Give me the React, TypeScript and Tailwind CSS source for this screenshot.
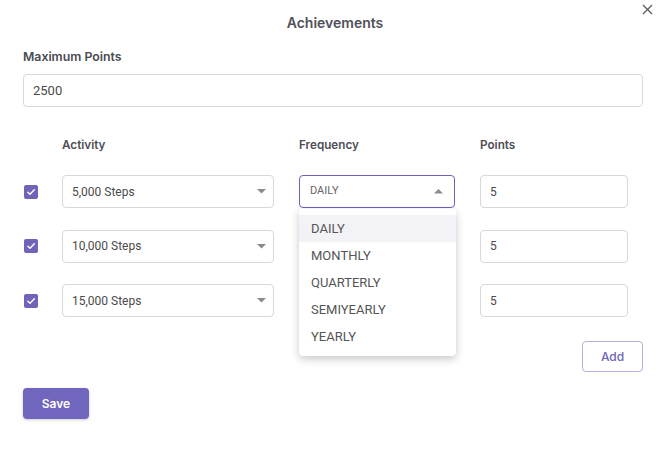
import React from "react";

const Check = () => (
  <div className="w-[14px] h-[14px] rounded-[2px] bg-[#7064b9] flex items-center justify-center shrink-0">
    <svg width="10" height="10" viewBox="0 0 10 10" fill="none">
      <path d="M1.8 5.2 L4 7.3 L8.3 2.8" stroke="white" strokeWidth="1.4" strokeLinecap="round" strokeLinejoin="round" />
    </svg>
  </div>
);

const Down = () => (
  <svg width="9" height="5" viewBox="0 0 9 5"><path d="M0 0 L9 0 L4.5 4.5 Z" fill="#8a8a8a" /></svg>
);
const Up = () => (
  <svg width="9" height="5" viewBox="0 0 9 5"><path d="M0 4.5 L9 4.5 L4.5 0 Z" fill="#8a8a8a" /></svg>
);

const rows = ["5,000 Steps", "10,000 Steps", "15,000 Steps"];
const opts = ["DAILY", "MONTHLY", "QUARTERLY", "SEMIYEARLY", "YEARLY"];
const roboto = { fontFamily: "Roboto, 'Noto Sans', sans-serif" };

export default function App() {
  return (
    <div
      className="relative w-[670px] h-[450px] bg-white pl-[23px] pr-[27px] flex flex-col text-[#4a4a52]"
      style={{ fontFamily: "Inter, 'Noto Sans', sans-serif" }}
    >
      <div className="h-[45px] flex items-center justify-center text-[14px] font-semibold text-[#505058] pl-[4px]">
        Achievements
      </div>
      <button className="absolute top-[3px] right-[17px] w-[12px] h-[12px] flex items-center justify-center">
        <svg width="11" height="11" viewBox="0 0 11 11">
          <path d="M1 1 L10 10 M10 1 L1 10" stroke="#5a5a62" strokeWidth="1.3" />
        </svg>
      </button>

      <div className="mt-[2px] h-[20px] flex items-center text-[12.3px] font-semibold">Maximum Points</div>
      <div
        className="mt-[7px] h-[33px] border border-[#d8d8dc] rounded-[4px] flex items-center px-[9px] text-[13px] text-[#4a4a4a]"
        style={roboto}
      >
        2500
      </div>

      <div className="mt-[29px] h-[20px] flex items-center text-[11.7px] font-semibold text-[#4d4d55]">
        <div className="w-[39px]" />
        <div className="w-[237px]">Activity</div>
        <div className="w-[181px]">Frequency</div>
        <div>Points</div>
      </div>

      <div className="relative mt-[19px] flex flex-col gap-[21.5px]">
        {rows.map((r, i) => (
          <div key={r} className="flex items-center pl-[1px]">
            <Check />
            <div
              className="ml-[24px] w-[212px] h-[33px] border border-[#d8d8dc] rounded-[4px] flex items-center justify-between pl-[9px] pr-[7px] text-[12px] text-[#4a4a4a]"
              style={roboto}
            >
              <span>{r}</span>
              <Down />
            </div>
            <div
              className={
                "ml-[25px] w-[156px] h-[33px] rounded-[4px] flex items-center justify-between pl-[10px] pr-[11px] text-[11px] text-[#666] " +
                (i === 0 ? "border border-[#6e63b8]" : "border border-[#d8d8dc]")
              }
              style={roboto}
            >
              <span>{i === 0 ? "DAILY" : ""}</span>
              {i === 0 ? <Up /> : <Down />}
            </div>
            <div
              className="ml-[25px] w-[148px] h-[33px] border border-[#d8d8dc] rounded-[4px] flex items-center px-[9px] text-[12px] text-[#4a4a4a]"
              style={roboto}
            >
              5
            </div>
          </div>
        ))}

        <div
          className="absolute left-[276px] top-[34px] w-[157px] bg-white rounded-[4px] py-[6px] shadow-[0_3px_8px_rgba(0,0,0,0.22)] z-10"
          style={roboto}
        >
          {opts.map((o, i) => (
            <div
              key={o}
              className={
                "h-[27px] flex items-center px-[12px] text-[13px] text-[#555] " + (i === 0 ? "bg-[#f3f2f7]" : "")
              }
            >
              {o}
            </div>
          ))}
        </div>
      </div>

      <div className="mt-[24px] flex justify-end">
        <button className="w-[61px] h-[31px] border border-[#b5aee0] rounded-[4px] text-[12px] font-medium text-[#6e63b8]">
          Add
        </button>
      </div>

      <div className="mt-[16px] flex">
        <button className="w-[66px] h-[31px] bg-[#7166bd] rounded-[4px] text-[12px] font-semibold text-white shadow-[0_1px_3px_rgba(0,0,0,0.2)]">
          Save
        </button>
      </div>
    </div>
  );
}
